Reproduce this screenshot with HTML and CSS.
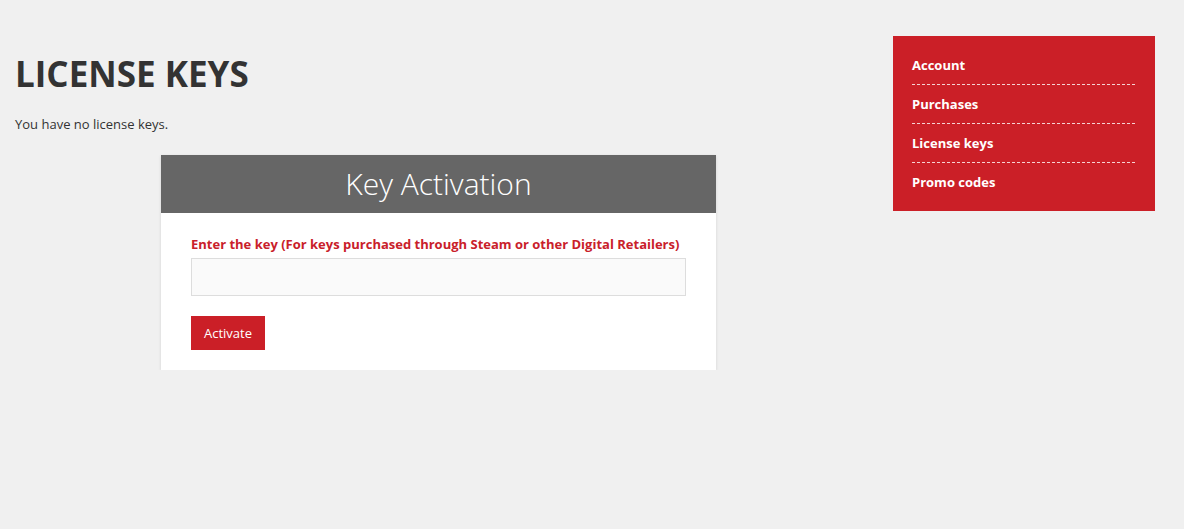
FILE: index.html
```html
<!DOCTYPE html>
<html lang="en">
<head>
  <meta charset="UTF-8" />
  <title>License keys</title>
  <link rel="stylesheet" href="styles.css">
</head>
<body>
  <div class="page">
    <main class="content">
      <h1>LICENSE KEYS</h1>
      <p class="empty">You have no license keys.</p>

      <div class="activation">
        <div class="activation-head">Key Activation</div>
        <form class="activation-body" onsubmit="return false;">
          <label for="key">Enter the key (For keys purchased through Steam or other Digital Retailers)</label>
          <input type="text" id="key" />
          <button type="submit">Activate</button>
        </form>
      </div>
    </main>

    <aside class="side-menu">
      <a href="#">Account</a>
      <a href="#">Purchases</a>
      <a href="#">License keys</a>
      <a href="#">Promo codes</a>
    </aside>
  </div>
</body>
</html>
```

FILE: styles.css
```css
body {
  margin: 0;
  background: #f0f0f0;
  font-family: 'Open Sans', sans-serif;
  color: #333;
  font-size: 13px;
}
.page {
  display: flex;
  align-items: flex-start;
  padding: 36px 29px 0 15px;
  gap: 31px;
}
.content { flex: 1; }
h1 {
  margin: 18px 0 0;
  font-size: 35px;
  line-height: 40px;
  font-weight: 700;
  color: #333;
}
.empty { margin: 20px 0 0; line-height: 20px; }

.activation {
  width: 555px;
  margin: 21px auto 0;
  background: white;
  box-shadow: 0 1px 3px rgba(0,0,0,0.12);
}
.activation-head {
  background: #666;
  color: white;
  height: 58px;
  line-height: 58px;
  text-align: center;
  font-size: 30px;
  font-weight: 300;
}
.activation-body {
  padding: 23px 30px 20px;
  display: flex;
  flex-direction: column;
  align-items: flex-start;
}
.activation-body label {
  color: #c9202a;
  font-weight: 700;
  font-size: 13px;
  line-height: 16px;
  margin-bottom: 6px;
}
.activation-body input {
  box-sizing: border-box;
  width: 100%;
  height: 38px;
  background: #fafafa;
  border: 1px solid #ddd;
  margin: 0 0 20px;
  font-family: inherit;
}
.activation-body button {
  background: #cb1f27;
  color: white;
  border: none;
  width: 74px;
  height: 34px;
  font-family: inherit;
  font-size: 13px;
  cursor: pointer;
}

.side-menu {
  width: 262px;
  box-sizing: border-box;
  background: #cb1f27;
  padding: 19px 20px 19px 19px;
  display: flex;
  flex-direction: column;
}
.side-menu a {
  color: white;
  font-weight: 700;
  font-size: 13px;
  text-decoration: none;
  line-height: 20px;
  padding: 0 0 9px;
  border-bottom: 1px dashed rgba(255,255,255,0.8);
  margin-bottom: 9px;
}
.side-menu a:last-child { border-bottom: none; margin-bottom: 0; padding-bottom: 0; }
```
